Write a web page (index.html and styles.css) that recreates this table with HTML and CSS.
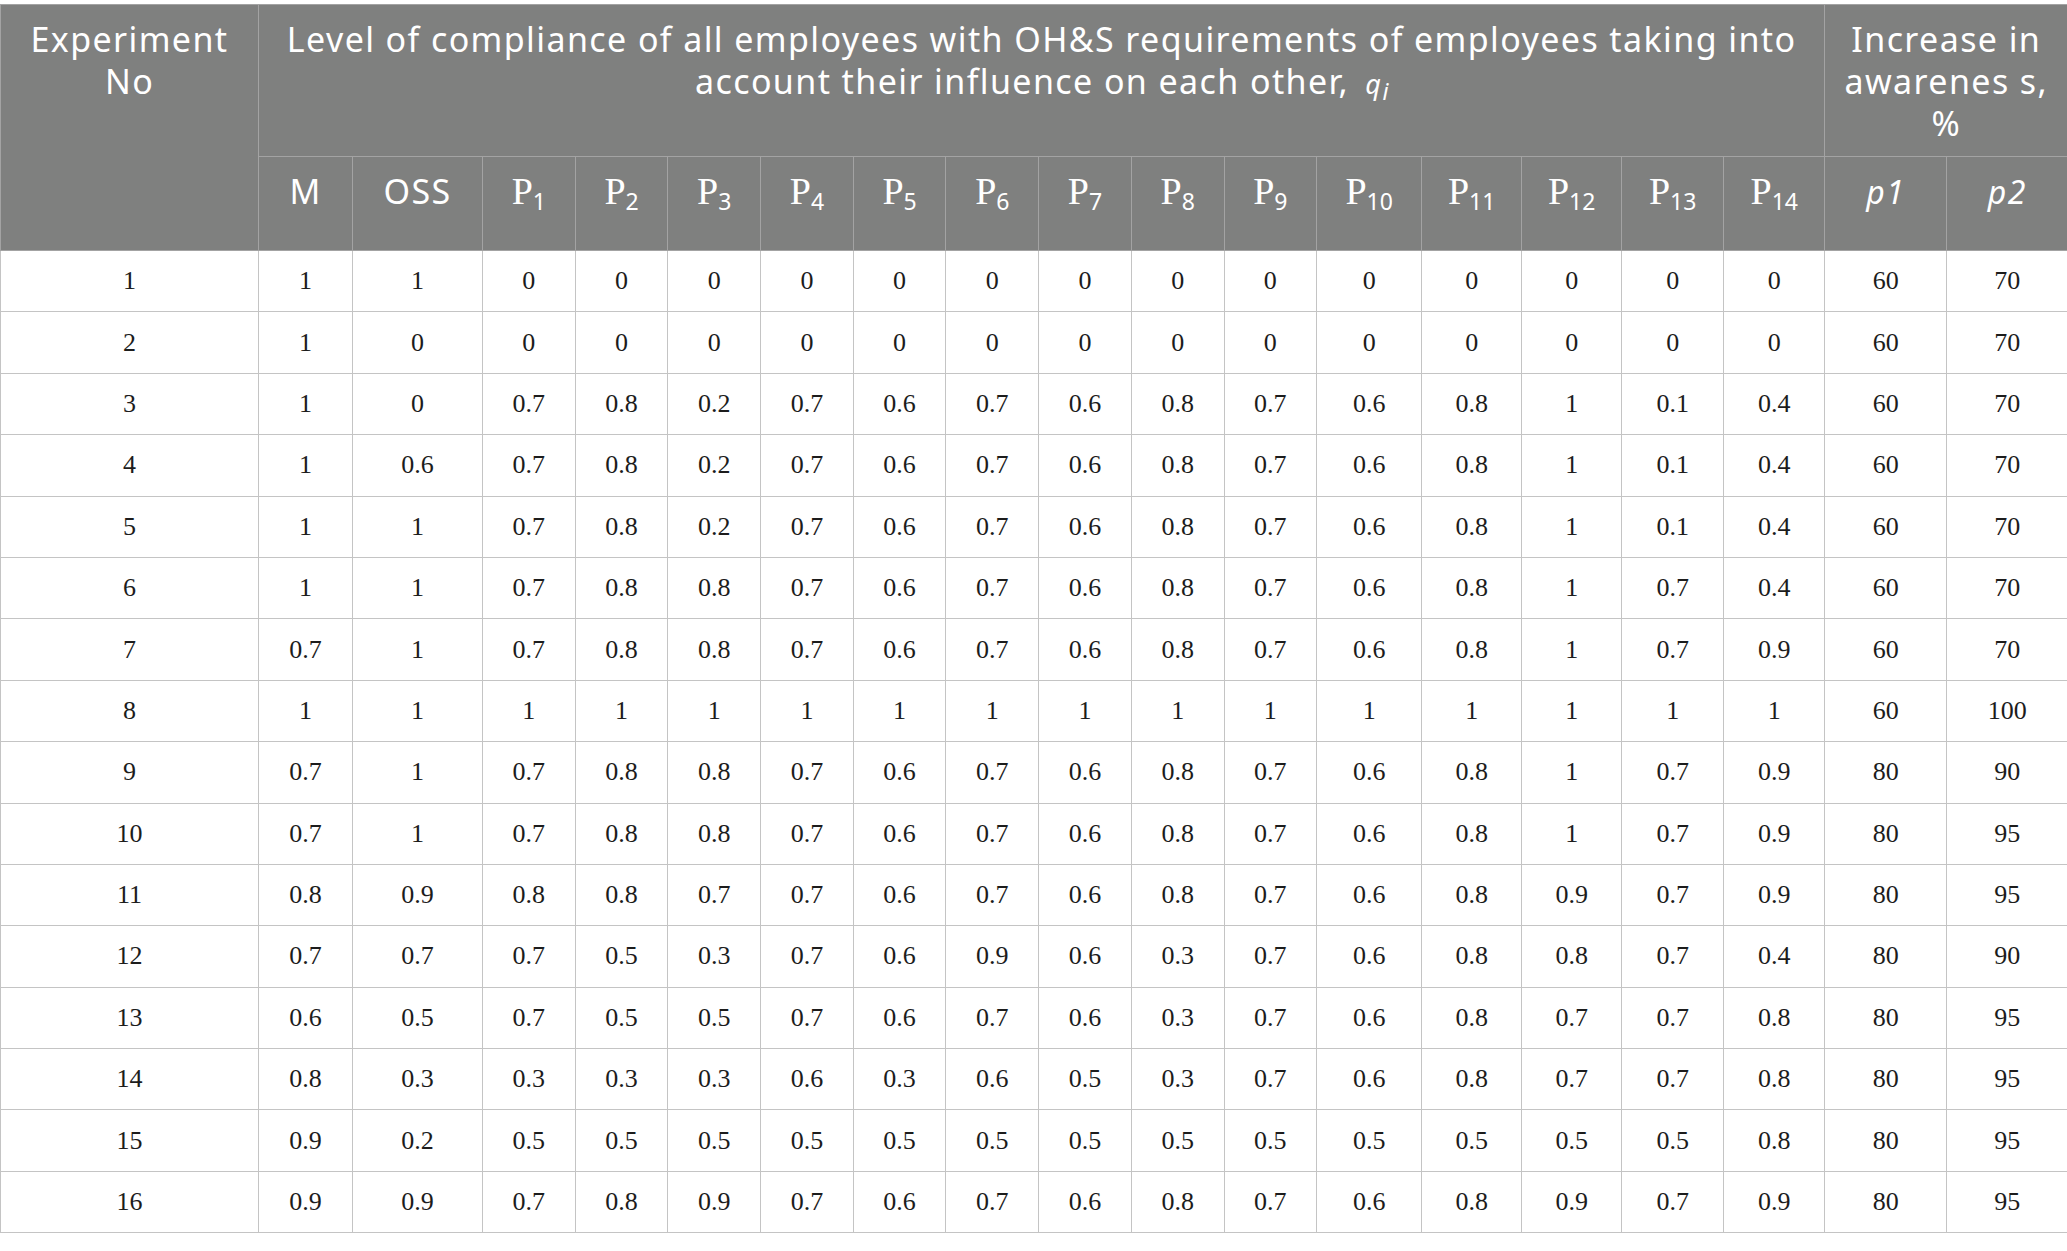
FILE: index.html
```html
<!DOCTYPE html>
<html lang="en">
<head>
    <meta charset="UTF-8">
    <meta name="viewport" content="width=device-width, initial-scale=1.0">
    <title>Experiments - OH&amp;S compliance</title>
    <link rel="stylesheet" href="styles.css">
</head>
<body>
    <table class="results">
        <colgroup>
            <col class="c-exp">
            <col class="c-m">
            <col class="c-oss">
            <col class="c-p"><col class="c-p"><col class="c-p"><col class="c-p"><col class="c-p">
            <col class="c-p"><col class="c-p"><col class="c-p"><col class="c-p">
            <col class="c-p10"><col class="c-p11"><col class="c-p11"><col class="c-p13"><col class="c-p14">
            <col class="c-aw"><col class="c-aw2">
        </colgroup>
        <thead>
            <tr class="head-top">
                <th rowspan="2">Experiment<br>No</th>
                <th colspan="16">Level of compliance of all employees with OH&amp;S requirements of employees taking into<br>account their influence on each other, <span class="qvar">q<sub>i</sub></span></th>
                <th colspan="2">Increase in<br>awarenes s,<br>%</th>
            </tr>
            <tr class="head-sub">
                <th>M</th>
                <th>OSS</th>
                <th><span class="sym">P</span><sub>1</sub></th>
                <th><span class="sym">P</span><sub>2</sub></th>
                <th><span class="sym">P</span><sub>3</sub></th>
                <th><span class="sym">P</span><sub>4</sub></th>
                <th><span class="sym">P</span><sub>5</sub></th>
                <th><span class="sym">P</span><sub>6</sub></th>
                <th><span class="sym">P</span><sub>7</sub></th>
                <th><span class="sym">P</span><sub>8</sub></th>
                <th><span class="sym">P</span><sub>9</sub></th>
                <th><span class="sym">P</span><sub>10</sub></th>
                <th><span class="sym">P</span><sub>11</sub></th>
                <th><span class="sym">P</span><sub>12</sub></th>
                <th><span class="sym">P</span><sub>13</sub></th>
                <th><span class="sym">P</span><sub>14</sub></th>
                <th><i class="pvar">p1</i></th>
                <th><i class="pvar">p2</i></th>
            </tr>
        </thead>
        <tbody>
            <tr><td>1</td><td>1</td><td>1</td><td>0</td><td>0</td><td>0</td><td>0</td><td>0</td><td>0</td><td>0</td><td>0</td><td>0</td><td>0</td><td>0</td><td>0</td><td>0</td><td>0</td><td>60</td><td>70</td></tr>
            <tr><td>2</td><td>1</td><td>0</td><td>0</td><td>0</td><td>0</td><td>0</td><td>0</td><td>0</td><td>0</td><td>0</td><td>0</td><td>0</td><td>0</td><td>0</td><td>0</td><td>0</td><td>60</td><td>70</td></tr>
            <tr><td>3</td><td>1</td><td>0</td><td>0.7</td><td>0.8</td><td>0.2</td><td>0.7</td><td>0.6</td><td>0.7</td><td>0.6</td><td>0.8</td><td>0.7</td><td>0.6</td><td>0.8</td><td>1</td><td>0.1</td><td>0.4</td><td>60</td><td>70</td></tr>
            <tr><td>4</td><td>1</td><td>0.6</td><td>0.7</td><td>0.8</td><td>0.2</td><td>0.7</td><td>0.6</td><td>0.7</td><td>0.6</td><td>0.8</td><td>0.7</td><td>0.6</td><td>0.8</td><td>1</td><td>0.1</td><td>0.4</td><td>60</td><td>70</td></tr>
            <tr><td>5</td><td>1</td><td>1</td><td>0.7</td><td>0.8</td><td>0.2</td><td>0.7</td><td>0.6</td><td>0.7</td><td>0.6</td><td>0.8</td><td>0.7</td><td>0.6</td><td>0.8</td><td>1</td><td>0.1</td><td>0.4</td><td>60</td><td>70</td></tr>
            <tr><td>6</td><td>1</td><td>1</td><td>0.7</td><td>0.8</td><td>0.8</td><td>0.7</td><td>0.6</td><td>0.7</td><td>0.6</td><td>0.8</td><td>0.7</td><td>0.6</td><td>0.8</td><td>1</td><td>0.7</td><td>0.4</td><td>60</td><td>70</td></tr>
            <tr><td>7</td><td>0.7</td><td>1</td><td>0.7</td><td>0.8</td><td>0.8</td><td>0.7</td><td>0.6</td><td>0.7</td><td>0.6</td><td>0.8</td><td>0.7</td><td>0.6</td><td>0.8</td><td>1</td><td>0.7</td><td>0.9</td><td>60</td><td>70</td></tr>
            <tr><td>8</td><td>1</td><td>1</td><td>1</td><td>1</td><td>1</td><td>1</td><td>1</td><td>1</td><td>1</td><td>1</td><td>1</td><td>1</td><td>1</td><td>1</td><td>1</td><td>1</td><td>60</td><td>100</td></tr>
            <tr><td>9</td><td>0.7</td><td>1</td><td>0.7</td><td>0.8</td><td>0.8</td><td>0.7</td><td>0.6</td><td>0.7</td><td>0.6</td><td>0.8</td><td>0.7</td><td>0.6</td><td>0.8</td><td>1</td><td>0.7</td><td>0.9</td><td>80</td><td>90</td></tr>
            <tr><td>10</td><td>0.7</td><td>1</td><td>0.7</td><td>0.8</td><td>0.8</td><td>0.7</td><td>0.6</td><td>0.7</td><td>0.6</td><td>0.8</td><td>0.7</td><td>0.6</td><td>0.8</td><td>1</td><td>0.7</td><td>0.9</td><td>80</td><td>95</td></tr>
            <tr><td>11</td><td>0.8</td><td>0.9</td><td>0.8</td><td>0.8</td><td>0.7</td><td>0.7</td><td>0.6</td><td>0.7</td><td>0.6</td><td>0.8</td><td>0.7</td><td>0.6</td><td>0.8</td><td>0.9</td><td>0.7</td><td>0.9</td><td>80</td><td>95</td></tr>
            <tr><td>12</td><td>0.7</td><td>0.7</td><td>0.7</td><td>0.5</td><td>0.3</td><td>0.7</td><td>0.6</td><td>0.9</td><td>0.6</td><td>0.3</td><td>0.7</td><td>0.6</td><td>0.8</td><td>0.8</td><td>0.7</td><td>0.4</td><td>80</td><td>90</td></tr>
            <tr><td>13</td><td>0.6</td><td>0.5</td><td>0.7</td><td>0.5</td><td>0.5</td><td>0.7</td><td>0.6</td><td>0.7</td><td>0.6</td><td>0.3</td><td>0.7</td><td>0.6</td><td>0.8</td><td>0.7</td><td>0.7</td><td>0.8</td><td>80</td><td>95</td></tr>
            <tr><td>14</td><td>0.8</td><td>0.3</td><td>0.3</td><td>0.3</td><td>0.3</td><td>0.6</td><td>0.3</td><td>0.6</td><td>0.5</td><td>0.3</td><td>0.7</td><td>0.6</td><td>0.8</td><td>0.7</td><td>0.7</td><td>0.8</td><td>80</td><td>95</td></tr>
            <tr><td>15</td><td>0.9</td><td>0.2</td><td>0.5</td><td>0.5</td><td>0.5</td><td>0.5</td><td>0.5</td><td>0.5</td><td>0.5</td><td>0.5</td><td>0.5</td><td>0.5</td><td>0.5</td><td>0.5</td><td>0.5</td><td>0.8</td><td>80</td><td>95</td></tr>
            <tr><td>16</td><td>0.9</td><td>0.9</td><td>0.7</td><td>0.8</td><td>0.9</td><td>0.7</td><td>0.6</td><td>0.7</td><td>0.6</td><td>0.8</td><td>0.7</td><td>0.6</td><td>0.8</td><td>0.9</td><td>0.7</td><td>0.9</td><td>80</td><td>95</td></tr>
        </tbody>
    </table>
</body>
</html>
```

FILE: styles.css
```css
body {
    margin: 0;
    padding-top: 4px;
    background: #ffffff;
    font-family: "Noto Sans", "Open Sans", sans-serif;
}
.results {
    width: 2067px;
    table-layout: fixed;
    border-collapse: collapse;
}
.c-exp { width: 258px; }
.c-m { width: 94px; }
.c-oss { width: 130px; }
.c-p { width: 92.7px; }
.c-p10 { width: 105px; }
.c-p11 { width: 100px; }
.c-p13 { width: 102px; }
.c-p14 { width: 101px; }
.c-aw { width: 122px; }
.c-aw2 { width: 121px; }

.results th {
    background: #7f807f;
    color: #ffffff;
    font-weight: normal;
    font-size: 34px;
    line-height: 42px;
    letter-spacing: 1.4px;
    text-align: center;
    vertical-align: top;
    padding: 13px 2px 0;
    border: 1px solid #a3a3a3;
}
.head-top th {
    height: 138px;
}
.head-sub th {
    height: 80px;
}
.results th sub {
    font-size: 23px;
    line-height: 0;
    letter-spacing: 0;
    vertical-align: -6px;
}
.sym {
    font-family: "Liberation Serif", "Times New Roman", serif;
    font-size: 38px;
    letter-spacing: 0;
}
.qvar {
    font-style: italic;
    font-size: 27px;
    margin-left: 6px;
}
.qvar sub {
    font-size: 20px;
}
.pvar {
    font-size: 32px;
}
.results td {
    height: 60.4px;
    padding: 0;
    border: 1px solid #c4c4c4;
    font-family: "Liberation Serif", "Times New Roman", serif;
    font-size: 26px;
    color: #1c1c1c;
    text-align: center;
    vertical-align: middle;
}
```
